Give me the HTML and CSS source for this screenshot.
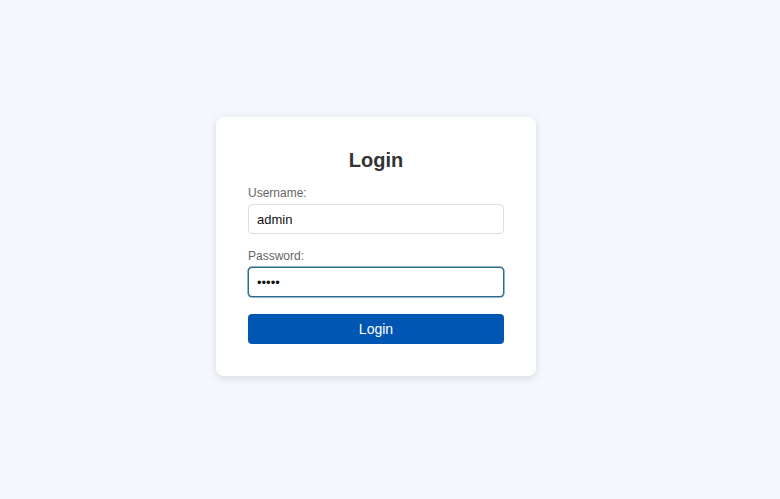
FILE: index.html
```html
<!DOCTYPE html>
<html lang="en">
<head>
  <meta charset="UTF-8">
  <title>Login</title>
  <link rel="stylesheet" href="styles.css">
</head>
<body>

<div class="wrap">
  <form class="card" onsubmit="return false">
    <h2>Login</h2>
    <label for="username">Username:</label>
    <input id="username" value="admin">
    <label for="password">Password:</label>
    <input id="password" class="focus" type="password" value="admin">
    <button type="submit">Login</button>
  </form>
</div>

</body>
</html>
```

FILE: styles.css
```css
body {
  margin: 0;
  font-family: "Liberation Sans", Arial, sans-serif;
  background: #f4f7fb;
}
.wrap {
  min-height: 499px;
  display: flex;
  justify-content: center;
  align-items: center;
  padding-right: 28px;
  padding-bottom: 6px;
  box-sizing: border-box;
}
.card {
  background: #fff;
  width: 320px;
  padding: 32px;
  box-sizing: border-box;
  border-radius: 8px;
  box-shadow: 0 2px 8px rgba(0, 0, 0, 0.12);
  display: flex;
  flex-direction: column;
}
h2 {
  margin: 0 0 14px;
  text-align: center;
  font-size: 20px;
  line-height: 23px;
  color: #333;
}
label {
  font-size: 12px;
  line-height: 14px;
  color: #666;
  margin-bottom: 4px;
}
input {
  height: 30px;
  padding: 0 8px;
  font-family: inherit;
  font-size: 13px;
  color: #111;
  border: 1px solid #ddd;
  border-radius: 4px;
  box-sizing: border-box;
  margin-bottom: 15px;
  outline: none;
}
input.focus {
  margin-bottom: 17px;
  border-color: #2d6a8f;
  box-shadow: 0 0 0 0.5px #2d6a8f;
}
button {
  height: 30px;
  background: #0056b3;
  color: #fff;
  border: none;
  border-radius: 4px;
  font-family: inherit;
  font-size: 14px;
  cursor: pointer;
}
```
